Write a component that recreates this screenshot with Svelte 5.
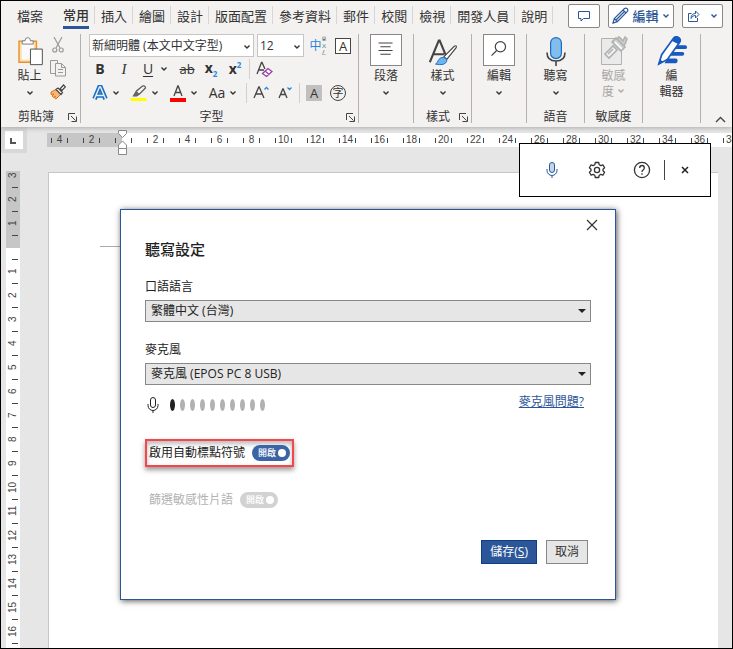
<script lang="ts">
  const tabs = [
    "插入",
    "繪圖",
    "設計",
    "版面配置",
    "參考資料",
    "郵件",
    "校閱",
    "檢視",
    "開發人員",
    "說明",
  ];

  // two characters per label on the horizontal ruler, one line per label on the vertical one
  const across = Array.from({ length: 22 }, (_, i) => i * 2 - 4);
  const down = Array.from({ length: 20 }, (_, i) => i - 3);

  let font = $state("新細明體 (本文中文字型)");
  let size = $state("12");
  let language = $state("繁體中文 (台灣)");
  let microphone = $state("麥克風 (EPOS PC 8 USB)");
  let punctuation = $state(true);
  let level = $state(1);
  let open = $state(true);
</script>

{#snippet chevron()}
  <svg class="chevron" width="8" height="6" viewBox="0 0 8 6">
    <path d="M1.5 1.5L4 4l2.500-2.500" fill="none" stroke="currentColor" stroke-width="1.400" />
  </svg>
{/snippet}

{#snippet launcher(name)}
  <button class="launcher" aria-label={name}>
    <svg width="9" height="9" viewBox="0 0 9 9" fill="none" stroke="#444">
      <path d="M.5 7V.5H7M3 3l4.500 4.500M8.500 3.500v5h-5" />
    </svg>
  </button>
{/snippet}

{#snippet mic(w, h)}
  <svg width={w} height={h} viewBox="0 0 12 16" fill="none" stroke="currentColor">
    <rect class="capsule" x="3.500" y=".5" width="5" height="10" rx="2.500" />
    <path d="M1 7v1.500a5 5 0 0 0 10 0V7M6 13.500V16" />
  </svg>
{/snippet}

<div class="window">
  <header class="ribbon">
    <div class="top">
      <nav>
        <button class="tab file">檔案</button>
        <button class="tab active"><span>常用</span></button>
        {#each tabs as tab}
          <button class="tab">{tab}</button>
        {/each}
      </nav>
      <div class="actions">
        <button class="action comment" aria-label="註解">
          <svg width="12" height="12" viewBox="0 0 12 12" fill="none" stroke="currentColor">
            <path d="M.5 1.500h11v7H5.500L3 11V8.500H.5z" />
          </svg>
        </button>
        <button class="action edit">
          <svg width="17" height="17" viewBox="0 0 17 17" fill="none" stroke="currentColor" stroke-width="1.200">
            <path d="M1 16l1.300-4.500L12.500 1.500q1.500-1 2.700.2t.2 2.700L5.300 14.600zM11 3l3 3M2.300 11.500l3 3M4 13l8-8" />
          </svg>
          <span>編輯</span>
          {@render chevron()}
        </button>
        <button class="action share" aria-label="共用">
          <svg width="13" height="13" viewBox="0 0 13 13" fill="none" stroke="currentColor">
            <path d="M4.500 4.500h-3v8h9V9M4 9.500C4 6 6 4.500 8.500 4.500V2l3.500 3.500L8.500 9V6.500C6.500 6.500 5 7.500 4 9.500z" />
          </svg>
          {@render chevron()}
        </button>
      </div>
    </div>

    <div class="groups">
      <section class="group clipboard">
        <div class="body">
          <button class="big">
            <svg width="28" height="32" viewBox="-1 -3 30 35" fill="none">
              <path d="M2 5h19v23H2z" fill="#fbe0b0" stroke="#e8912d" stroke-width="1.600" />
              <path d="M5 8h13v17H5z" fill="#fafafa" />
              <path d="M5.500 8V4.500h3q0-3.500 3-3.500t3 3.500h3V8z" fill="#fff" stroke="#767676" />
              <path d="M14.500 13.500h13v17h-13z" fill="#fff" stroke="#444" />
            </svg>
            <span>貼上</span>
            {@render chevron()}
          </button>
          <div class="stack">
            <button aria-label="剪下">
              <svg width="12" height="16" viewBox="0 0 12 16" fill="none" stroke="#999" stroke-width="1.200">
                <path d="M2 0l6 11M10 0L4 11" />
                <circle cx="2.800" cy="13" r="2" />
                <circle cx="9.200" cy="13" r="2" />
              </svg>
            </button>
            <button aria-label="複製">
              <svg width="16" height="17" viewBox="0 0 16 17" fill="#f3f2f1" stroke="#999">
                <path d="M.5.500h7v13h-7z" />
                <path d="M5.500 3.500h6l4 4v8.500h-10zM11.500 3.500v4h4M8 9.500h5M8 12.500h5" />
              </svg>
            </button>
            <button aria-label="複製格式">
              <svg width="16" height="16" viewBox="0 0 16 16">
                <path d="M1 8l6-3 4 5-5 5-1.500-1 1-2-2 1.500L2 12l2-2-3 .5z" fill="#f5b77a" stroke="#e8730c" />
                <path d="M6 5.500l2-1.500 4.500 4.500L11 10.500zM10 5l3.500-4 1.800 1.800L12 6.500z" fill="#fff" stroke="#444" stroke-width="1.200" />
              </svg>
            </button>
          </div>
        </div>
        <footer><span>剪貼簿</span>{@render launcher("剪貼簿")}</footer>
      </section>

      <section class="group font">
        <div class="row pickers">
          <div class="picker name">
            <select bind:value={font} aria-label="字型">
              <option>新細明體 (本文中文字型)</option>
            </select>
            {@render chevron()}
          </div>
          <div class="picker size">
            <select bind:value={size} aria-label="字型大小">
              <option>12</option>
            </select>
            {@render chevron()}
          </div>
          <button class="tool phonetic" aria-label="注音標示">
            <span>中</span><small>ㄓ<br />ㄨ<br />ㄥ</small>
          </button>
          <button class="tool"><span class="boxed">A</span></button>
        </div>
        <div class="row">
          <button class="tool"><b>B</b></button>
          <button class="tool"><i>I</i></button>
          <button class="tool split"><u>U</u>{@render chevron()}</button>
          <button class="tool"><s>ab</s></button>
          <button class="tool"><b class="script">x<sub>2</sub></b></button>
          <button class="tool"><b class="script">x<sup>2</sup></b></button>
          <span class="rule"></span>
          <button class="tool" aria-label="清除格式設定">
            <svg width="17" height="17" viewBox="0 0 17 17" fill="none" stroke="#444" stroke-width="1.300">
              <path d="M1 13L5.500 1.500h.5L9 8M3 9h5" />
              <path d="M6.500 12.500l5.500-5 4 3-5.500 5zM9 10l4 3.500" fill="#fff" stroke="#9b3cad" />
            </svg>
          </button>
        </div>
        <div class="row">
          <button class="tool split" aria-label="文字效果">
            <svg width="16" height="16" viewBox="0 0 16 16" fill="none">
              <path d="M2.500 14L7.500 2h1L13.500 14M5 10.500h6" stroke="#1c6fc0" stroke-width="4.600" />
              <path d="M2 15L7.500 2h1L14 15M4.500 10.500h7" stroke="#e3f2fc" stroke-width="1.400" />
            </svg>
            {@render chevron()}
          </button>
          <button class="tool split" aria-label="醒目提示">
            <svg width="17" height="17" viewBox="0 0 17 17">
              <path d="M3 11l3-5 6-5q3-.5 3 2L9 9l-3 2z" fill="#f3f2f1" stroke="#555" stroke-width="1.200" />
              <path d="M6 6l3 3-3 2H2.500z" fill="#666" />
              <path d="M0 13h16v3H0z" fill="#ff0" />
            </svg>
            {@render chevron()}
          </button>
          <button class="tool split" aria-label="字型色彩">
            <svg width="16" height="17" viewBox="0 0 16 17">
              <path d="M4 11L7.800 1h.4L12 11M5.200 7.500h5.600" fill="none" stroke="#444" stroke-width="1.300" />
              <path d="M0 13h16v4H0z" fill="red" />
            </svg>
            {@render chevron()}
          </button>
          <button class="tool split"><span>Aa</span>{@render chevron()}</button>
          <span class="rule"></span>
          <button class="tool" aria-label="放大字型">
            <svg width="16" height="16" viewBox="0 0 16 16" fill="none" stroke="#444" stroke-width="1.300">
              <path d="M1 13L5.800 2h.4L11 13M2.700 9h6.600" />
              <path d="M11.500 4.500L13.500 2.500l2 2" stroke="#2b88d8" />
            </svg>
          </button>
          <button class="tool" aria-label="縮小字型">
            <svg width="16" height="16" viewBox="0 0 16 16" fill="none" stroke="#444" stroke-width="1.300">
              <path d="M2 13L5.800 4h.4L10 13M3.500 9.500h5" />
              <path d="M10.500 2.500l2 2 2-2" stroke="#2b88d8" />
            </svg>
          </button>
          <span class="rule"></span>
          <button class="tool"><span class="shaded">A</span></button>
          <button class="tool"><span class="circled">字</span></button>
        </div>
        <footer><span>字型</span>{@render launcher("字型")}</footer>
      </section>

      <section class="group narrow">
        <button class="big">
          <svg class="framed" width="32" height="32" viewBox="0 0 32 32" stroke="#444" stroke-width="1.200">
            <path d="M8 8.500h15M10 12.500h11M8 16.500h15M10 20.500h11" />
          </svg>
          <span>段落</span>
          {@render chevron()}
        </button>
      </section>

      <section class="group">
        <button class="big">
          <svg width="32" height="32" viewBox="0 -2 32 34" fill="none" stroke="#444">
            <path d="M2 28L11.500 5h1L20 23M6 19.500h11" stroke-width="2.200" />
            <path d="M17 22L28 11q3-1.500 2 1.500L20 25z" fill="#fff" stroke-width="1.200" />
            <path d="M8 30q2-1 3-4 2-4 6-3t3 4q-2 5-12 3z" fill="#6db5ee" stroke="#1c6fc0" />
          </svg>
          <span>樣式</span>
          {@render chevron()}
        </button>
        <footer><span>樣式</span>{@render launcher("樣式")}</footer>
      </section>

      <section class="group narrow">
        <button class="big">
          <svg class="framed" width="32" height="32" viewBox="0 0 32 32" fill="none" stroke="#444" stroke-width="1.300">
            <circle cx="17.500" cy="12.500" r="5.500" />
            <path d="M13.500 16.500L8 22" />
          </svg>
          <span>編輯</span>
          {@render chevron()}
        </button>
      </section>

      <section class="group">
        <button class="big">
          <svg width="20" height="32" viewBox="0 0 20 32" fill="none">
            <rect x="4.600" y="3.600" width="10.800" height="21" rx="5.400" fill="#83bdec" stroke="#1c6fc0" stroke-width="1.200" />
            <path d="M1 18.500q0 8.500 9 8.500t9-8.500M10 27v5" stroke="#444" stroke-width="1.600" />
          </svg>
          <span>聽寫</span>
          {@render chevron()}
        </button>
        <footer><span>語音</span></footer>
      </section>

      <section class="group">
        <button class="big" disabled>
          <svg width="28" height="32" viewBox="0 0 28 32" fill="none" stroke="#b1b1b1">
            <path d="M1.500 4.500h20v26h-20z" fill="#eaeaea" />
            <path d="M5 20l8-8 4 4-8 8zM8 20l5-5" fill="#f3f2f1" stroke-width="1.600" />
            <path d="M12 8l4-4 9 9-4 4zM17 5l2-2 4 4 2-4 2 2-2 5-2 2" fill="#d0d0d0" stroke-width="1.600" />
            <path d="M15 8l7 7" stroke="#fff" stroke-width="1.500" />
          </svg>
          <span>敏感<br />度{@render chevron()}</span>
        </button>
        <footer><span>敏感度</span></footer>
      </section>

      <section class="group">
        <button class="big">
          <svg width="32" height="32" viewBox="0 0 32 34">
            <path d="M19 12h11q2 0 2 2t-2 2H15zM15 19h12q2 0 2 2t-2 2H11zM11 26h9q2 0 2 2.500T20 31H8z" fill="#185abd" />
            <path d="M2 32l3-10L18 4q2-2 5 0t1 5L11 27z" fill="#fff" stroke="#185abd" stroke-width="1.800" />
            <path d="M17 5q3-4 6-2t2 5l-2 3-8-4zM1 33l2-6 4 2.500z" fill="#185abd" />
          </svg>
          <span>編<br />輯器</span>
        </button>
      </section>

      <button class="collapse" aria-label="摺疊功能區">
        <svg width="11" height="7" viewBox="0 0 11 7" fill="none" stroke="#444" stroke-width="1.400">
          <path d="M1 6l4.500-4.500L10 6" />
        </svg>
      </button>
    </div>
  </header>

  <div class="rulers">
    <div class="corner">
      <svg width="18" height="18" viewBox="0 0 18 18"><path d="M6 7v5h5" fill="none" stroke="#555" stroke-width="2" /></svg>
    </div>
    <div class="across">
      {#each across as n}
        <div class="cell" class:margin={n < 0} class:origin={n === 0}>
          <span>{n === 0 ? "" : Math.abs(n)}</span>
          {#if n === 0}
            <svg class="indent" width="10" height="26" viewBox="0 0 10 26" fill="#fff" stroke="#888">
              <path d="M.5.500h8v3l-4 4-4-4zM.5 18.500v-3.500l4-4 4 4v3.500zM.5 18.500h8v6h-8z" />
            </svg>
          {/if}
        </div>
      {/each}
    </div>
  </div>

  <main class="workspace">
    <div class="down">
      {#each down as n}
        <div class="cell" class:margin={n < 0} class:origin={n === 0}>
          <span>{n === 0 ? "" : Math.abs(n)}</span>
        </div>
      {/each}
    </div>
    <div class="page"><hr /></div>
  </main>

  <div class="dictation">
    <button class="blue" aria-label="聽寫">{@render mic(12, 16)}</button>
    <button aria-label="設定">
      <svg width="18" height="18" viewBox="0 0 18 18" fill="none" stroke="#333" stroke-width="1.300" stroke-linejoin="round">
        <path d="M7.300 1.500h3.400l.5 2.200 1.600.9 2.100-.8 1.700 3-1.600 1.400v1.600l1.600 1.400-1.700 3-2.100-.8-1.600.9-.5 2.200H7.300l-.5-2.200-1.600-.9-2.100.8-1.700-3L3 9.800V8.200L1.400 6.800l1.700-3 2.100.8 1.600-.9z" />
        <circle cx="9" cy="9" r="2.600" />
      </svg>
    </button>
    <button aria-label="說明">
      <svg width="18" height="18" viewBox="0 0 18 18" fill="none" stroke="#333" stroke-width="1.300">
        <circle cx="9" cy="9" r="7.600" />
        <path d="M6.700 7q0-2.500 2.300-2.500T11.300 7q0 1-1.200 1.900T9 11M9 12.300v1.500" />
      </svg>
    </button>
    <span class="bar"></span>
    <button class="end" aria-label="關閉工具列">
      <svg width="8" height="8" viewBox="0 0 8 8" stroke="#222" stroke-width="1.500"><path d="M1 1l6 6M7 1L1 7" /></svg>
    </button>
  </div>

  {#if open}
    <div class="dialog" role="dialog" aria-labelledby="dialog-title">
      <button class="close" aria-label="關閉" onclick={() => (open = false)}>
        <svg width="12" height="12" viewBox="0 0 12 12" stroke="#333" stroke-width="1.200"><path d="M1 1l10 10M11 1L1 11" /></svg>
      </button>
      <h1 id="dialog-title">聽寫設定</h1>

      <label for="language">口語語言</label>
      <div class="dropdown">
        <select id="language" bind:value={language}>
          <option>繁體中文 (台灣)</option>
        </select>
        <svg width="8" height="4" viewBox="0 0 8 4"><path d="M0 0h8L4 4z" fill="#222" /></svg>
      </div>

      <label for="microphone">麥克風</label>
      <div class="dropdown">
        <select id="microphone" bind:value={microphone}>
          <option>麥克風 (EPOS PC 8 USB)</option>
        </select>
        <svg width="8" height="4" viewBox="0 0 8 4"><path d="M0 0h8L4 4z" fill="#222" /></svg>
      </div>

      <div class="input-level">
        {@render mic(12, 16)}
        <div class="meter" role="meter" aria-label="音量" aria-valuenow={level} aria-valuemin="0" aria-valuemax="10">
          {#each Array(10) as _, i}
            <i class:on={i < level}></i>
          {/each}
        </div>
        <a href="#help">麥克風問題?</a>
      </div>

      <label class="option highlighted">
        啟用自動標點符號
        <span class="switch">開啟<input type="checkbox" bind:checked={punctuation} /></span>
      </label>
      <label class="option disabled">
        篩選敏感性片語
        <span class="switch">開啟<input type="checkbox" checked disabled /></span>
      </label>

      <div class="buttons">
        <button class="primary" onclick={() => (open = false)}>儲存(<u>S</u>)</button>
        <button onclick={() => (open = false)}>取消</button>
      </div>
    </div>
  {/if}
</div>

<style>
  :global(body) {
    margin: 0;
  }
  .window,
  button,
  select {
    font-family: "Open Sans", "Noto Sans CJK TC", sans-serif;
    font-size: 12px;
    line-height: 16px;
    color: #333;
  }
  .window {
    position: relative;
    box-sizing: border-box;
    height: 100vh;
    overflow: hidden;
    display: flex;
    flex-direction: column;
    border: 1px solid #000;
    background: #e6e6e6;
  }
  button {
    padding: 0;
    border: 0;
    background: none;
  }
  svg {
    display: block;
    flex: none;
  }

  /* ribbon */
  .ribbon {
    position: relative;
    background: #f3f2f1;
    box-shadow: 0 1px 5px #aaa;
  }
  .top {
    display: flex;
    justify-content: space-between;
    height: 29px;
    padding-right: 9px;
  }
  nav {
    display: flex;
    padding-left: 10px;
  }
  .tab {
    position: relative;
    padding: 0 6px;
    font-size: 13px;
    white-space: nowrap;
  }
  .tab:not(.file)::after {
    content: "";
    position: absolute;
    right: 0;
    top: 5px;
    height: 18px;
    border-right: 1px solid #d8d6d4;
  }
  .tab.file {
    margin-right: 8px;
  }
  .tab.active {
    font-weight: 500;
  }
  .tab.active span {
    display: block;
    padding: 4px 0 3px;
    border-bottom: 3px solid #2b579a;
  }
  .actions {
    display: flex;
    align-items: center;
    gap: 8px;
  }
  .action {
    display: flex;
    align-items: center;
    justify-content: center;
    box-sizing: border-box;
    height: 24px;
    border: 1px solid #8a8886;
    border-radius: 2px;
    background: #fff;
    color: #2b579a;
  }
  .comment {
    width: 32px;
  }
  .edit {
    width: 66px;
    gap: 3px;
    font-size: 13px;
    font-weight: 500;
  }
  .share {
    width: 41px;
    gap: 10px;
  }

  .groups {
    display: flex;
    padding: 4px 0;
  }
  .group {
    box-sizing: border-box;
    width: 58px;
    height: 89px;
    display: flex;
    flex-direction: column;
    border-right: 1px solid #b3b0ad;
  }
  .group.narrow {
    width: 55px;
  }
  .group.clipboard {
    width: 80px;
  }
  .group.font {
    width: 278px;
    padding-left: 7px;
  }
  .group footer {
    display: flex;
    align-items: center;
    justify-content: center;
    margin-top: auto;
    padding: 0 3px;
    line-height: 12px;
  }
  .group footer span {
    flex: 1;
    text-align: center;
    white-space: nowrap;
  }
  .group.font footer {
    margin-left: -14px;
  }
  .body {
    display: flex;
    justify-content: center;
    gap: 6px;
  }
  .big {
    display: flex;
    flex-direction: column;
    align-items: center;
    gap: 2px;
  }
  .big > span .chevron {
    display: inline-block;
    margin: 0 0 2px 3px;
  }
  .big > .chevron {
    margin-top: 4px;
  }
  .big:disabled {
    color: #a9a7a5;
  }
  .framed {
    box-sizing: border-box;
    border: 1px solid #8a8886;
    background: #fff;
  }
  .stack {
    display: flex;
    flex-direction: column;
    align-items: center;
    gap: 7px;
    padding-top: 3px;
  }
  .row {
    display: flex;
    align-items: center;
    height: 24px;
  }
  .pickers {
    gap: 3px;
    padding-left: 1px;
    height: 23px;
  }
  .picker {
    position: relative;
    box-sizing: border-box;
    height: 23px;
    border: 1px solid #c8c6c4;
    background: #fff;
  }
  .picker.name {
    width: 165px;
  }
  .picker.size {
    width: 47px;
  }
  .picker .chevron {
    position: absolute;
    right: 2px;
    top: 9px;
  }
  .pickers .tool {
    width: 22px;
  }
  select {
    appearance: none;
    box-sizing: border-box;
    width: 100%;
    height: 100%;
    border: 0;
    border-radius: 0;
    background: none;
    padding: 0 2px;
  }
  .tool {
    display: flex;
    align-items: center;
    justify-content: center;
    width: 24px;
    height: 24px;
    flex: none;
    font-size: 14px;
  }
  .tool.split {
    width: 39px;
    padding-right: 7px;
  }
  .tool.split > :first-child:not(.chevron) {
    width: 24px;
    text-align: center;
  }
  .tool u {
    text-underline-offset: 2px;
  }
  .tool i {
    font-family: "Liberation Serif", serif;
    font-size: 15px;
  }
  .tool s {
    font-size: 13px;
  }
  .script sub,
  .script sup {
    font-size: 8px;
    line-height: 8px;
    color: #2b88d8;
  }
  .phonetic span {
    color: #2b88d8;
    font-size: 12px;
  }
  .phonetic small {
    font-size: 5px;
    line-height: 7px;
  }
  .boxed {
    width: 14px;
    line-height: 14px;
    border: 1px solid #444;
    background: #fff;
    font-size: 13px;
  }
  .shaded {
    width: 16px;
    background: #c2c0be;
    font-size: 13px;
  }
  .circled {
    width: 14px;
    line-height: 14px;
    border: 1px solid #444;
    border-radius: 50%;
    font-size: 11px;
  }
  .rule {
    width: 1px;
    height: 20px;
    margin: 0 2px;
    background: #d2d0ce;
  }
  .collapse {
    margin: auto 6px 0 auto;
  }

  /* rulers */
  .rulers {
    display: flex;
    flex: none;
    height: 44px;
  }
  .corner {
    box-sizing: border-box;
    width: 26px;
    height: 26px;
    padding: 4px;
    background: #d8d8d8;
  }
  .corner svg {
    background: #fff;
  }
  .across {
    display: flex;
    flex: 1;
    min-width: 0;
    height: 14px;
    margin: 6px 0 0 20px;
    background: #fff;
  }
  .across,
  .down {
    font: 10px/14px "Liberation Sans", sans-serif;
    color: #444;
  }
  .across .cell {
    position: relative;
    flex: none;
    width: 32px;
  }
  .across span {
    display: block;
    width: 17px;
    height: 14px;
    margin-left: 4px;
    text-align: center;
    background:
      linear-gradient(#444, #444) 0 5px / 1px 5px no-repeat,
      linear-gradient(#444, #444) 100% 5px / 1px 5px no-repeat;
  }
  .cell.margin {
    background: #c6c6c6;
  }
  .across .origin {
    background: linear-gradient(to right, #c6c6c6 11px, #fff 11px);
  }
  .indent {
    position: absolute;
    left: 7px;
    top: -3px;
  }
  .workspace {
    display: flex;
    flex: 1;
    min-height: 0;
  }
  .down {
    width: 14px;
    margin-left: 5px;
    background: #fff;
  }
  .down .cell {
    display: flex;
    justify-content: center;
    height: 24px;
    background: linear-gradient(#444, #444) 6px 16px / 6px 1px no-repeat;
  }
  .down .margin {
    background-color: #c6c6c6;
  }
  .down .origin {
    background:
      linear-gradient(#444, #444) 6px 16px / 6px 1px no-repeat,
      linear-gradient(#c6c6c6 5px, #fff 5px);
  }
  .down span {
    display: flex;
    align-items: center;
    justify-content: center;
    height: 8px;
    writing-mode: vertical-rl;
    transform: rotate(180deg);
  }
  .page {
    flex: 1;
    margin: 1px 14px 0 28px;
    border: solid #c6c6c6;
    border-width: 1px 0 0 1px;
    background: #fff;
  }
  .page hr {
    width: 24px;
    margin: 73px 0 0 51px;
    border: 0;
    border-top: 1px solid #aaa;
  }

  /* floating dictation toolbar */
  .dictation {
    position: absolute;
    top: 142px;
    right: 21px;
    display: flex;
    align-items: center;
    box-sizing: border-box;
    width: 192px;
    height: 54px;
    padding-left: 9px;
    border: 1px solid #000;
    background: #fff;
  }
  .dictation button {
    display: flex;
    justify-content: center;
    width: 45px;
  }
  .dictation .blue {
    color: #2b579a;
  }
  .blue :global(.capsule) {
    fill: #c5d5ee;
  }
  .bar {
    height: 20px;
    border-left: 1px solid #444;
  }
  .dictation .end {
    width: 40px;
  }

  /* dialog */
  .dialog {
    position: absolute;
    top: 208px;
    left: 119px;
    right: 116px;
    display: flex;
    flex-direction: column;
    padding: 0 24px 35px;
    border: 1px solid #2b579a;
    background: #fff;
    color: #222;
    box-shadow: 1px 1px 6px #555;
  }
  .close {
    position: absolute;
    top: 9px;
    right: 17px;
  }
  h1 {
    margin: 29px 0 20px;
    font-size: 15px;
    font-weight: 500;
    line-height: 20px;
  }
  .dropdown {
    position: relative;
    height: 22px;
    margin: 5px 0 20px;
  }
  .dropdown select {
    border: 1px solid #8a8886;
    padding: 0 5px;
    background: #e6e6e6;
    color: #222;
  }
  .dropdown svg {
    position: absolute;
    right: 5px;
    top: 9px;
  }
  .input-level {
    display: flex;
    align-items: center;
    padding: 0 7px 0 2px;
    margin-top: -11px;
  }
  .meter {
    display: flex;
    gap: 5px;
    margin: 0 auto 0 11px;
  }
  .meter i {
    width: 5px;
    height: 12px;
    border-radius: 50%;
    background: #b1b1b1;
  }
  .meter .on {
    background: #222;
  }
  a {
    color: #2b579a;
    padding-bottom: 6px;
  }
  .option {
    display: flex;
    align-items: center;
    align-self: flex-start;
    gap: 7px;
    padding: 4px 2px;
    border: 2px solid transparent;
  }
  .highlighted {
    margin: 23px 0 19px;
    border-color: #f5474b;
    box-shadow: 0 3px 5px #999, inset 0 3px 5px #bbb;
  }
  .disabled {
    color: #b1b1b1;
  }
  .switch {
    display: flex;
    align-items: center;
    justify-content: flex-end;
    gap: 2px;
    box-sizing: border-box;
    width: 38px;
    height: 16px;
    padding-right: 4px;
    border-radius: 8px;
    background: #3b64a5;
    color: #fff;
    font-size: 9px;
    font-weight: 500;
  }
  .disabled .switch {
    background: #d2d2d2;
  }
  .switch input {
    appearance: none;
    width: 8px;
    height: 8px;
    margin: 0;
    border-radius: 50%;
    background: #fff;
  }
  .buttons {
    display: flex;
    justify-content: flex-end;
    gap: 9px;
    margin: 26px 3px 0 0;
  }
  .buttons button {
    height: 24px;
    padding: 0 8px;
    border: 1px solid #8a8886;
    background: #e6e6e6;
  }
  .buttons .primary {
    border-color: #103f7f;
    background: #2b579a;
    color: #fff;
  }
</style>
